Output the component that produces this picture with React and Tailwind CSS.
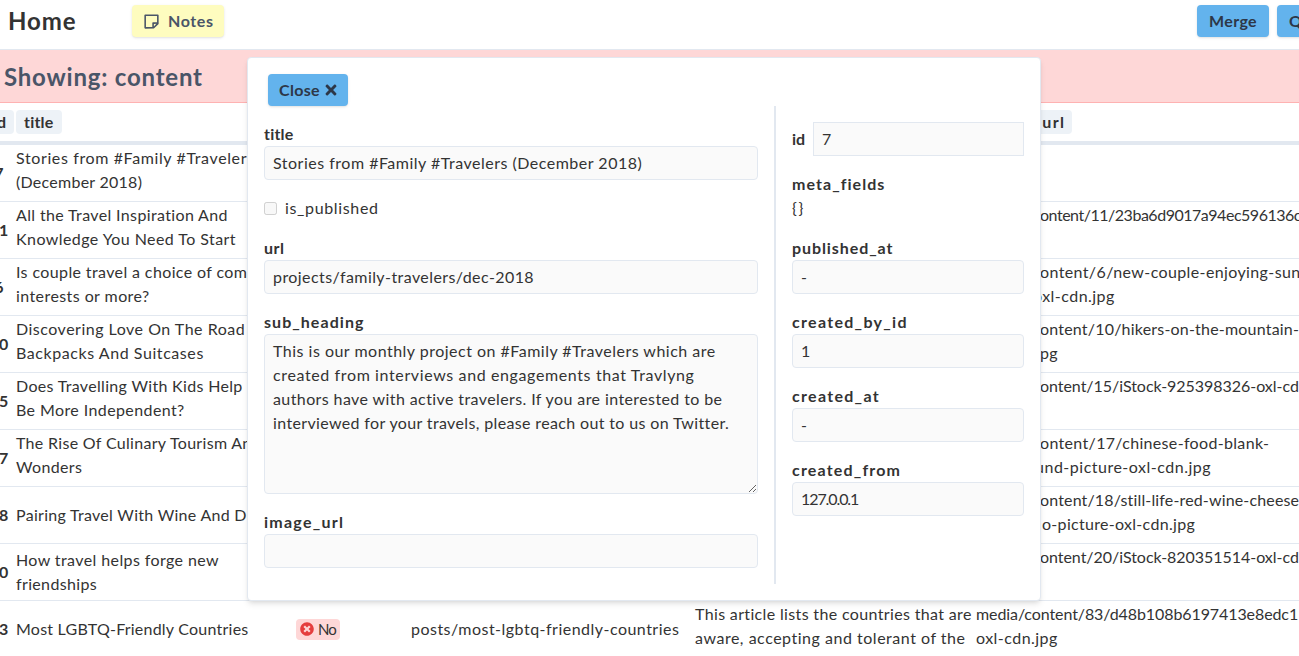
import { FaTimes, FaTimesCircle } from 'react-icons/fa';
import { RiStickyNoteLine } from 'react-icons/ri';

const rows = [
  {
    id: '7',
    title: [['Stories from #Family #Travelers', 'tracking-[0.62px]'], ['(December 2018)', 'tracking-[0.26px]']],
    image: [],
  },
  {
    id: '11',
    title: [['All the Travel Inspiration And', 'tracking-[0.36px]'], ['Knowledge You Need To Start', 'tracking-[0.43px]']],
    image: [['ontent/11/23ba6d9017a94ec596136c', 'tracking-[-0.48px]', true]],
  },
  {
    id: '6',
    title: [['Is couple travel a choice of common', 'tracking-[0.38px]'], ['interests or more?', 'tracking-[0.42px]']],
    image: [['ontent/6/new-couple-enjoying-sun', 'tracking-[0.38px]', true], ['oxl-cdn.jpg', 'pl-[57px] tracking-[0.46px]']],
  },
  {
    id: '10',
    title: [['Discovering Love On The Road', 'tracking-[0.5px]'], ['Backpacks And Suitcases', 'tracking-[0.57px]']],
    image: [['ontent/10/hikers-on-the-mountain-', 'tracking-[0.2px]', true], ['pg', 'pl-[64px] tracking-[0.4px]']],
  },
  {
    id: '15',
    title: [['Does Travelling With Kids Help', 'tracking-[0.32px]'], ['Be More Independent?', 'tracking-[0.4px]']],
    image: [['ontent/15/iStock-925398326-oxl-cdn', 'tracking-[-0.04px]', true]],
  },
  {
    id: '17',
    title: [['The Rise Of Culinary Tourism And', 'tracking-[0.31px]'], ['Wonders', 'tracking-[0.36px]']],
    image: [['ontent/17/chinese-food-blank-', 'tracking-[0.33px]', true], ['background-picture-oxl-cdn.jpg', 'tracking-[0.5px]']],
  },
  {
    id: '18',
    title: [['Pairing Travel With Wine And D', 'tracking-[0.29px]']],
    centered: true,
    image: [['ontent/18/still-life-red-wine-cheese', 'tracking-[0.15px]', true], ['o-picture-oxl-cdn.jpg', 'pl-[66px] tracking-[0.3px]']],
  },
  {
    id: '20',
    title: [['How travel helps forge new', 'tracking-[0.4px]'], ['friendships', 'tracking-[0.35px]']],
    centered: true,
    image: [['ontent/20/iStock-820351514-oxl-cdn', 'tracking-[-0.04px]', true]],
  },
  {
    id: '83',
    title: [['Most LGBTQ-Friendly Countries', 'tracking-[0.23px]']],
    centered: true,
    published: 'No',
    url: 'posts/most-lgbtq-friendly-countries',
    sub: [['This article lists the countries that are', 'tracking-[0.35px]'], ['aware, accepting and tolerant of the', 'tracking-[0.52px]']],
    image: [['media/content/83/d48b108b6197413e8edc1', 'tracking-[-0.09px]'], ['oxl-cdn.jpg', 'tracking-[0.46px]']],
  },
];

const columns = 'grid grid-cols-[34px_280px_115px_284px_281px_400px] w-[1394px]';

function Lines({ lines = [], centered }) {
  return (
    <div className={centered ? 'self-center' : 'self-start pt-px'}>
      {lines.map(([text, cls, prefixed]) => (
        <div key={text} className={cls}>
          {prefixed && <span className="inline-block w-16 tracking-[1px]">media/c</span>}
          {text}
        </div>
      ))}
    </div>
  );
}

function HeadBadge({ children, className = '' }) {
  return (
    <span className={`h-6 rounded bg-[#edf2f7] px-2 font-bold ${className}`}>{children}</span>
  );
}

function Button({ children, className = '' }) {
  return (
    <button className={`flex h-8 shrink-0 items-center rounded bg-[#63b3ed] font-bold text-[#2d3748] shadow ${className}`}>
      {children}
    </button>
  );
}

function Field({ label, labelClass, value, valueClass = '' }) {
  return (
    <label className="block">
      <span className={`block font-bold ${labelClass}`}>{label}</span>
      <input
        readOnly
        defaultValue={value}
        className={`block h-[34px] w-full rounded border border-[#e2e8f0] bg-[#fafafa] px-2 pb-[2px] outline-none ${valueClass}`}
      />
    </label>
  );
}

const summary = [
  ['This is our monthly project on #Family #Travelers which are', 'tracking-[0.49px]'],
  ['created from interviews and engagements that Travlyng', 'tracking-[0.62px]'],
  ['authors have with active travelers. If you are interested to be', 'tracking-[0.4px]'],
  ['interviewed for your travels, please reach out to us on Twitter.', 'tracking-[0.36px]'],
];

function RecordModal() {
  return (
    <div className="absolute left-[247px] top-[57px] h-[544px] w-[794px] rounded border border-[#e2e8f0] bg-white p-4 shadow-md">
      <Button className="mx-1 w-20 gap-[3px] pl-[11px]">
        <span className="tracking-[0.3px]">Close</span>
        <FaTimes className="size-4 shrink-0" />
      </Button>
      <div className="flex h-[478px]">
        <div className="flex w-[510px] flex-col gap-4 pr-4 pt-4">
          <Field label="title" labelClass="tracking-[0.19px]" value="Stories from #Family #Travelers (December 2018)" valueClass="tracking-[0.5px]" />
          <label className="flex items-center gap-2">
            <input type="checkbox" disabled className="size-[13px]" />
            <span className="tracking-[0.65px]">is_published</span>
          </label>
          <Field label="url" labelClass="tracking-[0.5px]" value="projects/family-travelers/dec-2018" valueClass="tracking-[0.42px]" />
          <div>
            <div className="font-bold tracking-[1.05px]">sub_heading</div>
            <div className="h-40 resize overflow-auto whitespace-nowrap rounded border border-[#e2e8f0] bg-[#fafafa] px-2 py-1">
              {summary.map(([text, cls]) => (
                <div key={text} className={cls}>{text}</div>
              ))}
            </div>
          </div>
          <Field label="image_url" labelClass="tracking-[1.25px]" value="" />
        </div>
        <div className="flex grow flex-col gap-4 border-l-2 border-[#e2e8f0] pl-4 pt-4">
          <label className="flex items-center">
            <span className="w-[21px] font-bold">id</span>
            <input readOnly defaultValue="7" className="h-[34px] w-[211px] border border-[#e2e8f0] bg-[#fafafa] px-2 pb-[2px] outline-none" />
          </label>
          <div>
            <div className="font-bold tracking-[1.05px]">meta_fields</div>
            <div className="tracking-[1.8px]">{'{}'}</div>
          </div>
          <Field label="published_at" labelClass="tracking-[0.92px]" value="-" />
          <Field label="created_by_id" labelClass="tracking-[1.3px]" value="1" />
          <Field label="created_at" labelClass="tracking-[1.3px]" value="-" />
          <Field label="created_from" labelClass="tracking-[1.18px]" value="127.0.0.1" valueClass="tracking-[-1.09px]" />
        </div>
      </div>
    </div>
  );
}

export default function App() {
  return (
    <div className="relative h-[656px] w-full overflow-hidden whitespace-nowrap bg-white font-['Lato',sans-serif] text-base leading-6 text-[#333]">
      <header className="flex h-[50px] border-b border-[#e2e8f0] pl-2 pt-[5px]">
        <h1 className="w-[124px] shrink-0 text-2xl font-bold leading-8 tracking-[0.9px]">Home</h1>
        <button className="flex h-8 w-[92px] shrink-0 items-center rounded bg-[#fefcbf] pl-[10px] font-bold text-[#4a5568] shadow">
          <RiStickyNoteLine className="size-[19px] shrink-0" />
          <span className="pl-[7px] tracking-[0.61px]">Notes</span>
        </button>
        <div className="ml-[973px] flex shrink-0 gap-2">
          <Button className="w-[72px] justify-center tracking-[0.35px]">Merge</Button>
          <Button className="px-3">Query</Button>
        </div>
      </header>

      <div className="flex h-[53px] items-center border-b border-[#feb2b2] bg-[#fed7d7] pl-1 pt-px">
        <h2 className="text-2xl font-bold tracking-[0.79px] text-[#4a5568]">Showing: content</h2>
      </div>

      <div className="-ml-[18px]">
        <div className={`${columns} h-[42px] border-b-4 border-[#e2e8f0] pt-[7px]`}>
          <div className="flex justify-end pr-[2px]"><HeadBadge>id</HeadBadge></div>
          <div className="flex"><HeadBadge className="w-[46px] tracking-[0.19px]">title</HeadBadge></div>
          <div />
          <div />
          <div />
          <div className="flex"><HeadBadge className="w-24 tracking-[1.39px]">image_url</HeadBadge></div>
        </div>
        {rows.map((row) => (
          <div key={row.id} className={`${columns} h-[57px] border-b border-[#e2e8f0]`}>
            <div className="self-center text-center font-bold">{row.id}</div>
            <Lines lines={row.title} centered={row.centered} />
            <div className="self-center">
              {row.published && (
                <span className="flex h-[21px] w-11 items-center gap-1 rounded bg-[#fed7d7] pl-1">
                  <FaTimesCircle className="size-[14px] shrink-0 text-[#e53e3e]" />
                  <span className="text-[15px] tracking-[-1px]">{row.published}</span>
                </span>
              )}
            </div>
            <div className="self-center tracking-[0.48px]">{row.url}</div>
            <Lines lines={row.sub} />
            <Lines lines={row.image} />
          </div>
        ))}
      </div>

      <RecordModal />
    </div>
  );
}
